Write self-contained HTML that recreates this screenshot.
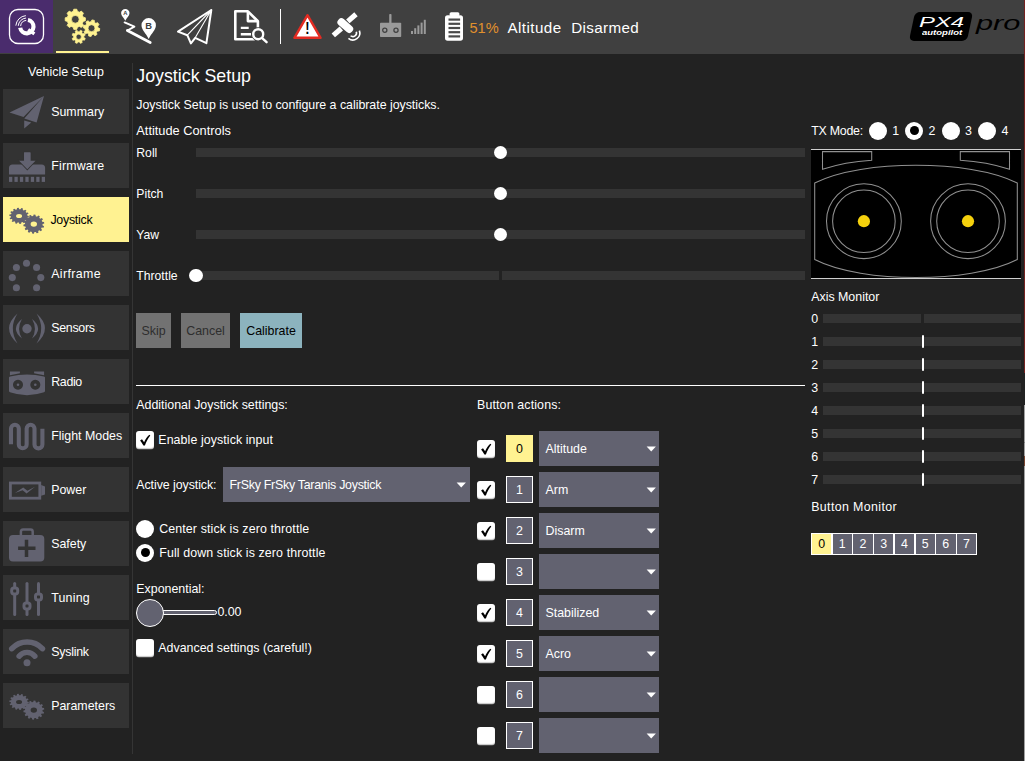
<!DOCTYPE html>
<html lang="en"><head><meta charset="utf-8"><title>QGroundControl - Joystick Setup</title>
<style>
html,body{margin:0;padding:0;}
body{width:1025px;height:761px;overflow:hidden;background:#222222;position:relative;
 font-family:"Liberation Sans",sans-serif;color:#fff;}
.b{position:absolute;box-sizing:border-box;display:block;}
.t{position:absolute;white-space:nowrap;}
</style></head>
<body>
<!-- toolbar -->
<div class="b" style="left:0px;top:0px;width:1025px;height:54px;background:#404040;"></div>
<div class="b" style="left:0px;top:0px;width:53px;height:53px;background:#4a2c6d;"></div>
<svg class="b" style="left:5px;top:5px;" width="44" height="44" viewBox="0 0 44 44">
<rect x="4.5" y="4.5" width="34" height="34" rx="8.5" ry="8.5" fill="none" stroke="#fff" stroke-width="1.3"/>
<path d="M22.96 15.0 A6.7 6.7 0 1 1 15.2 22.76" fill="none" stroke="#fff" stroke-width="4.2"/>
<path d="M23.2 24.6 L29.4 28.8" stroke="#fff" stroke-width="3.4" fill="none"/>
<path d="M10.84 20.64 A11 11 0 0 1 20.84 10.64" fill="none" stroke="#fff" stroke-width="1"/>
<path d="M13.23 20.85 A8.6 8.6 0 0 1 21.05 13.03" fill="none" stroke="#fff" stroke-width="1"/>
<path d="M15.62 21.06 A6.2 6.2 0 0 1 21.26 15.42" fill="none" stroke="#fff" stroke-width="1"/>
</svg>
<div class="b" style="left:56px;top:51px;width:53px;height:2px;background:#fff291;"></div>
<svg class="b" style="left:60px;top:5px;" width="46" height="44" viewBox="0 0 46 44"><path fill="#fff291" fill-rule="evenodd" stroke="#fff291" stroke-width="0.8" stroke-linejoin="round" d="M23.23 12.20 L25.39 12.78 L25.39 15.82 L23.23 16.40 L22.39 18.42 L23.50 20.36 L21.36 22.50 L19.42 21.39 L17.40 22.23 L16.82 24.39 L13.78 24.39 L13.20 22.23 L11.18 21.39 L9.24 22.50 L7.10 20.36 L8.21 18.42 L7.37 16.40 L5.21 15.82 L5.21 12.78 L7.37 12.20 L8.21 10.18 L7.10 8.24 L9.24 6.10 L11.18 7.21 L13.20 6.37 L13.78 4.21 L16.82 4.21 L17.40 6.37 L19.42 7.21 L21.36 6.10 L23.50 8.24 L22.39 10.18Z M19.20 14.30 A3.9 3.9 0 1 0 11.40 14.30 A3.9 3.9 0 1 0 19.20 14.30Z"/><path fill="#fff291" fill-rule="evenodd" stroke="#fff291" stroke-width="0.8" stroke-linejoin="round" d="M37.99 22.82 L39.79 23.62 L39.30 26.04 L37.33 26.08 L36.36 27.52 L37.06 29.36 L35.01 30.72 L33.58 29.36 L31.88 29.69 L31.08 31.49 L28.66 31.00 L28.62 29.03 L27.18 28.06 L25.34 28.76 L23.98 26.71 L25.34 25.28 L25.01 23.58 L23.21 22.78 L23.70 20.36 L25.67 20.32 L26.64 18.88 L25.94 17.04 L27.99 15.68 L29.42 17.04 L31.12 16.71 L31.92 14.91 L34.34 15.40 L34.38 17.37 L35.82 18.34 L37.66 17.64 L39.02 19.69 L37.66 21.12Z M35.00 23.20 A3.5 3.5 0 1 0 28.00 23.20 A3.5 3.5 0 1 0 35.00 23.20Z"/><path fill="#fff291" fill-rule="evenodd" stroke="#fff291" stroke-width="0.6" stroke-linejoin="round" d="M23.86 32.48 L25.30 33.42 L24.54 35.29 L22.84 34.94 L21.87 35.93 L22.22 37.62 L20.36 38.39 L19.41 36.95 L18.02 36.96 L17.08 38.40 L15.21 37.64 L15.56 35.94 L14.57 34.97 L12.88 35.32 L12.11 33.46 L13.55 32.51 L13.54 31.12 L12.10 30.18 L12.86 28.31 L14.56 28.66 L15.53 27.67 L15.18 25.98 L17.04 25.21 L17.99 26.65 L19.38 26.64 L20.32 25.20 L22.19 25.96 L21.84 27.66 L22.83 28.63 L24.52 28.28 L25.29 30.14 L23.85 31.09Z M21.30 31.80 A2.6 2.6 0 1 0 16.10 31.80 A2.6 2.6 0 1 0 21.30 31.80Z"/></svg>
<svg class="b" style="left:116px;top:5px;" width="46" height="44" viewBox="0 0 46 44">
<path d="M9.3 3.9 a4.2 4.2 0 0 1 4.2 4.2 c0 2.6 -2.6 4.8 -4.2 7.6 c-1.6 -2.8 -4.2 -5 -4.2 -7.6 a4.2 4.2 0 0 1 4.2 -4.2z" fill="#fff"/>
<path d="M32.7 13.1 a7.2 7.2 0 0 1 7.2 7.2 c0 4.6 -4.6 8.2 -7.2 13.6 c-2.6 -5.4 -7.2 -9 -7.2 -13.6 a7.2 7.2 0 0 1 7.2 -7.2z" fill="#fff"/>
<path d="M8.6 17.4 L18.4 21.7 L11.4 25.5" fill="none" stroke="#fff" stroke-width="1.9" stroke-linejoin="round" stroke-linecap="round"/>
<path d="M11.4 25.5 L34.2 37.6" fill="none" stroke="#fff" stroke-width="2.8" stroke-linecap="round"/>
<text x="9.3" y="10.2" font-family="Liberation Sans, sans-serif" font-size="5.8" font-weight="bold" text-anchor="middle" fill="#404040">A</text>
<text x="32.7" y="23.7" font-family="Liberation Sans, sans-serif" font-size="9.4" font-weight="bold" text-anchor="middle" fill="#404040">B</text>
</svg>
<svg class="b" style="left:172px;top:5px;" width="46" height="44" viewBox="0 0 46 44">
<path d="M39.3 5.0 L6 26.6 L15.3 30.2 L18.9 38.4 L23.2 32.8 L34.4 38.2 Z" fill="none" stroke="#fff" stroke-width="2" stroke-linejoin="round"/>
<path d="M39.3 5.0 L15.3 30.2 M39.3 5.0 L23.2 32.8" fill="none" stroke="#fff" stroke-width="1.1"/>
</svg>
<svg class="b" style="left:228px;top:5px;" width="46" height="44" viewBox="0 0 46 44">
<path d="M29.9 24 V16.2 L19.9 6.3 H7.3 V34.3 H26" fill="none" stroke="#fff" stroke-width="2.6" stroke-linejoin="round" stroke-linecap="round"/>
<path d="M19.9 6.6 V16.1 H29.6" fill="none" stroke="#fff" stroke-width="2.6" stroke-linejoin="round"/>
<path d="M12.8 22.9 H20.7 M12.8 29.2 H23" fill="none" stroke="#fff" stroke-width="2.4"/>
<circle cx="30.2" cy="29.2" r="6.9" fill="#404040"/>
<circle cx="30.2" cy="29.2" r="5" fill="#404040" stroke="#fff" stroke-width="2.4"/>
<path d="M34.4 33.4 L38.6 37.2" stroke="#fff" stroke-width="2.4" stroke-linecap="round"/>
</svg>
<div class="b" style="left:280px;top:9px;width:1.4px;height:35px;background:#ffffff;"></div>
<svg class="b" style="left:290px;top:8px;" width="36" height="36" viewBox="0 0 36 36">
<path d="M17.5 7.2 L30.6 29.8 H4.4 Z" fill="#fff" stroke="#e22b22" stroke-width="2.4" stroke-linejoin="round"/>
<text x="17.5" y="26.2" font-family="Liberation Sans, sans-serif" font-size="16" font-weight="bold" text-anchor="middle" fill="#000" transform="translate(17.5 0) scale(0.8 1) translate(-17.5 0)">!</text>
</svg>
<svg class="b" style="left:330px;top:8px;" width="36" height="36" viewBox="0 0 36 36">
<rect x="-9" y="-3.9" width="18" height="7.8" rx="3.6" fill="#fff" transform="translate(15.3 17.6) rotate(41)"/>
<rect x="-5.4" y="-2.6" width="10.8" height="5.2" fill="#fff" transform="translate(21.9 9.8) rotate(-41)"/>
<rect x="-5.3" y="-2.6" width="10.6" height="5.2" fill="#fff" transform="translate(7.3 23.9) rotate(-41)"/>
<path d="M29.38 22.64 A6.9 6.9 0 0 1 18.46 30.29" fill="none" stroke="#fff" stroke-width="1.6"/>
<path d="M26.28 23.77 A3.6 3.6 0 0 1 20.59 27.76" fill="none" stroke="#fff" stroke-width="1.6"/>
</svg>
<svg class="b" style="left:376px;top:8px;" width="30" height="36" viewBox="0 0 30 36">
<rect x="4" y="14.7" width="21.2" height="14.4" rx="0.8" fill="#9a9a9a"/>
<rect x="13.2" y="5.9" width="2.3" height="10" rx="0.8" fill="#9a9a9a"/>
<circle cx="8.8" cy="22.3" r="2.1" fill="none" stroke="#404040" stroke-width="1.25"/>
<circle cx="20" cy="22.3" r="2.1" fill="none" stroke="#404040" stroke-width="1.25"/>
</svg>
<svg class="b" style="left:410px;top:14px;" width="18" height="22" viewBox="0 0 18 22"><rect x="1.0" y="17.0" width="2" height="3.0" fill="#9a9a9a"/><rect x="4.2" y="14.2" width="2" height="5.8" fill="#9a9a9a"/><rect x="7.4" y="11.4" width="2" height="8.6" fill="#9a9a9a"/><rect x="10.6" y="8.6" width="2" height="11.4" fill="#9a9a9a"/><rect x="13.8" y="5.8" width="2" height="14.2" fill="#9a9a9a"/></svg>
<svg class="b" style="left:445px;top:11.6px;" width="18" height="29" viewBox="0 0 18 29"><rect x="0" y="3.15" width="18" height="25.5" rx="2.6" fill="#fff"/><rect x="4.6" y="0.2" width="9.8" height="4" rx="1.6" fill="#fff"/><rect x="3.5" y="6.50" width="11.6" height="2.2" fill="#4a4a4a"/><rect x="3.5" y="10.70" width="11.6" height="2.2" fill="#4a4a4a"/><rect x="3.5" y="14.90" width="11.6" height="2.2" fill="#4a4a4a"/><rect x="3.5" y="19.10" width="11.6" height="2.2" fill="#4a4a4a"/><rect x="3.5" y="23.30" width="11.6" height="2.2" fill="#4a4a4a"/></svg>
<div class="t" style="top:18.00px;font-size:14.6px;line-height:20px;color:#e0912d;left:469.5px;">51%</div>
<div class="t" style="top:17.00px;font-size:15.2px;line-height:21px;color:#fff;left:507.5px;letter-spacing:0.42px;">Altitude</div>
<div class="t" style="top:17.00px;font-size:15.2px;line-height:21px;color:#fff;left:571.2px;letter-spacing:0.35px;">Disarmed</div>
<div class="b" style="left:911.5px;top:12px;width:58px;height:29px;background:#000;border-radius:5px;transform:skewX(-12deg);"></div>
<div class="t" style="left:918.5px;top:14.4px;font-size:14.4px;line-height:16px;font-style:italic;color:#fff;transform:scaleX(1.66);transform-origin:left center;">PX4</div>
<div class="t" style="left:921.5px;top:29.2px;font-size:7px;line-height:8px;font-style:italic;font-weight:bold;color:#fff;transform:scaleX(1.36);transform-origin:left center;">autopilot</div>
<div class="t" style="left:976px;top:10.6px;font-size:20.5px;line-height:23px;font-style:italic;color:#000;transform:scaleX(1.5);transform-origin:left center;">pro</div>
<!-- sidebar -->
<div class="t" style="top:63.00px;font-size:12.4px;line-height:18px;color:#fff;left:-84px;width:300px;text-align:center;">Vehicle Setup</div>
<div class="b" style="left:132px;top:63px;width:1px;height:691px;background:#353535;"></div>
<div class="b" style="left:3px;top:89px;width:126px;height:45px;background:#333333;"></div>
<svg class="b" style="left:9px;top:93.5px;overflow:visible;" width="36" height="36" viewBox="0 0 36 36"><path d="M35 2 L0.5 18.5 L14.5 23 Z M35 2 L15.3 24.6 L27.6 28.4 Z M15.2 26.4 L22.3 28.6 L15.2 34.4 Z" fill="#626270"/></svg>
<div class="t" style="top:103.00px;font-size:12.4px;line-height:18px;color:#fff;left:51.2px;">Summary</div>
<div class="b" style="left:3px;top:143px;width:126px;height:45px;background:#333333;"></div>
<svg class="b" style="left:9px;top:147.5px;overflow:visible;" width="36" height="36" viewBox="0 0 36 36"><path d="M0 26.6 V20 Q0 16.5 3.5 16.5 H32.6 Q36.1 16.5 36.1 20 V26.6 Z" fill="#626270"/><path d="M15.1 4.5 H21.4 V12.7 H26.5 L18.3 21.25 L10.1 12.7 H15.1 Z" fill="#626270" stroke="#333333" stroke-width="1.7" paint-order="stroke"/><rect x="15.1" y="4.5" width="6.3" height="9" fill="#626270"/><rect x="0.00" y="28.8" width="3.3" height="5.1" fill="#626270"/><rect x="5.45" y="28.8" width="3.3" height="5.1" fill="#626270"/><rect x="10.90" y="28.8" width="3.3" height="5.1" fill="#626270"/><rect x="16.35" y="28.8" width="3.3" height="5.1" fill="#626270"/><rect x="21.80" y="28.8" width="3.3" height="5.1" fill="#626270"/><rect x="27.25" y="28.8" width="3.3" height="5.1" fill="#626270"/><rect x="32.70" y="28.8" width="3.3" height="5.1" fill="#626270"/></svg>
<div class="t" style="top:157.00px;font-size:12.4px;line-height:18px;color:#fff;letter-spacing:0.186px;left:51.2px;">Firmware</div>
<div class="b" style="left:3px;top:197px;width:126px;height:45px;background:#fff291;"></div>
<svg class="b" style="left:9px;top:201.5px;overflow:visible;" width="36" height="36" viewBox="0 0 36 36"><g transform="translate(10.05 13.9) scale(1 0.82)"><path fill="#626270" d="M8.19 -0.39 L9.80 0.14 L9.63 1.81 L7.95 2.01 L7.55 3.20 L8.77 4.38 L7.90 5.81 L6.29 5.26 L5.41 6.16 L6.00 7.75 L4.59 8.66 L3.38 7.47 L2.21 7.90 L2.04 9.59 L0.38 9.79 L-0.19 8.20 L-1.44 8.07 L-2.32 9.52 L-3.90 8.99 L-3.73 7.30 L-4.80 6.65 L-6.22 7.57 L-7.42 6.41 L-6.53 4.96 L-7.21 3.91 L-8.89 4.12 L-9.46 2.55 L-8.04 1.63 L-8.19 0.39 L-9.80 -0.14 L-9.63 -1.81 L-7.95 -2.01 L-7.55 -3.20 L-8.77 -4.38 L-7.90 -5.81 L-6.29 -5.26 L-5.41 -6.16 L-6.00 -7.75 L-4.59 -8.66 L-3.38 -7.47 L-2.21 -7.90 L-2.04 -9.59 L-0.38 -9.79 L0.19 -8.20 L1.44 -8.07 L2.32 -9.52 L3.90 -8.99 L3.73 -7.30 L4.80 -6.65 L6.22 -7.57 L7.42 -6.41 L6.53 -4.96 L7.21 -3.91 L8.89 -4.12 L9.46 -2.55 L8.04 -1.63Z M0.01 0.00 A0.01 0.01 0 1 0 -0.01 0.00 A0.01 0.01 0 1 0 0.01 0.00Z"/></g><g transform="translate(24.8 22.1) scale(1 0.91)"><path fill="#626270" d="M8.70 1.33 L10.26 2.24 L9.73 3.95 L7.93 3.81 L7.26 4.97 L8.27 6.47 L7.05 7.78 L5.49 6.88 L4.38 7.63 L4.65 9.42 L2.98 10.07 L1.96 8.58 L0.64 8.78 L0.10 10.50 L-1.68 10.36 L-1.95 8.58 L-3.23 8.18 L-4.46 9.50 L-6.01 8.61 L-5.48 6.88 L-6.46 5.97 L-8.15 6.63 L-9.15 5.15 L-7.93 3.82 L-8.41 2.57 L-10.21 2.44 L-10.48 0.67 L-8.80 0.01 L-8.70 -1.33 L-10.26 -2.24 L-9.73 -3.95 L-7.93 -3.81 L-7.26 -4.97 L-8.27 -6.47 L-7.05 -7.78 L-5.49 -6.88 L-4.38 -7.63 L-4.65 -9.42 L-2.98 -10.07 L-1.96 -8.58 L-0.64 -8.78 L-0.10 -10.50 L1.68 -10.36 L1.95 -8.58 L3.23 -8.18 L4.46 -9.50 L6.01 -8.61 L5.48 -6.88 L6.46 -5.97 L8.15 -6.63 L9.15 -5.15 L7.93 -3.82 L8.41 -2.57 L10.21 -2.44 L10.48 -0.67 L8.80 -0.01Z M0.01 0.00 A0.01 0.01 0 1 0 -0.01 0.00 A0.01 0.01 0 1 0 0.01 0.00Z"/></g><ellipse cx="10.05" cy="13.9" rx="3.0" ry="2.0" fill="#fff291"/><ellipse cx="24.8" cy="22.1" rx="3.2" ry="2.6" fill="#fff291"/></svg>
<div class="t" style="top:211.00px;font-size:12.4px;line-height:18px;color:#000;letter-spacing:-0.257px;left:50.4px;">Joystick</div>
<div class="b" style="left:3px;top:251px;width:126px;height:45px;background:#333333;"></div>
<svg class="b" style="left:9px;top:255.5px;overflow:visible;" width="36" height="36" viewBox="0 0 36 36"><circle cx="17.5" cy="7.25" r="3.55" fill="#626270"/><circle cx="27.6" cy="11.5" r="3.55" fill="#626270"/><circle cx="31.8" cy="21.6" r="3.55" fill="#626270"/><circle cx="27.6" cy="31.7" r="3.55" fill="#626270"/><circle cx="7.4" cy="31.7" r="3.55" fill="#626270"/><circle cx="3.3" cy="21.6" r="3.55" fill="#626270"/><circle cx="7.4" cy="11.5" r="3.55" fill="#626270"/></svg>
<div class="t" style="top:265.00px;font-size:12.4px;line-height:18px;color:#fff;letter-spacing:0.371px;left:51.2px;">Airframe</div>
<div class="b" style="left:3px;top:305px;width:126px;height:45px;background:#333333;"></div>
<svg class="b" style="left:9px;top:309.5px;overflow:visible;" width="36" height="36" viewBox="0 0 36 36"><circle cx="18" cy="18.7" r="4.7" fill="#626270"/><path d="M8.5 3.6 Q-8.5 18.55 8.5 33.5 Q-0.9 18.55 8.5 3.6 Z" fill="#626270"/><path d="M12.9 9 Q0.9 18.75 12.9 28.5 Q7.3 18.75 12.9 9 Z" fill="#626270"/><path d="M27.5 3.6 Q44.5 18.55 27.5 33.5 Q36.9 18.55 27.5 3.6 Z" fill="#626270"/><path d="M23.1 9 Q35.1 18.75 23.1 28.5 Q28.7 18.75 23.1 9 Z" fill="#626270"/></svg>
<div class="t" style="top:319.00px;font-size:12.4px;line-height:18px;color:#fff;letter-spacing:-0.283px;left:51.2px;">Sensors</div>
<div class="b" style="left:3px;top:359px;width:126px;height:45px;background:#333333;"></div>
<svg class="b" style="left:9px;top:363.5px;overflow:visible;" width="36" height="36" viewBox="0 0 36 36"><path d="M0 13.6 Q0 12.6 1 12.4 Q18 8.6 35 12.4 Q36 12.6 36 13.6 V27 Q36 28 35 28.3 Q18 34.2 1 28.3 Q0 28 0 27 Z M9 15.75 a5 5 0 1 0 0.01 0 Z M26.3 15.75 a5 5 0 1 0 0.01 0 Z" fill="#626270" fill-rule="evenodd"/><circle cx="9" cy="20.75" r="1.3" fill="#626270"/><circle cx="26.3" cy="20.75" r="1.3" fill="#626270"/><path d="M0.9 7.4 H10.9 V9.2 L0.9 11.2 Z M35.1 7.4 H25.1 V9.2 L35.1 11.2 Z" fill="#626270"/></svg>
<div class="t" style="top:373.00px;font-size:12.4px;line-height:18px;color:#fff;letter-spacing:-0.325px;left:51.2px;">Radio</div>
<div class="b" style="left:3px;top:413px;width:126px;height:45px;background:#333333;"></div>
<svg class="b" style="left:9px;top:417.5px;overflow:visible;" width="36" height="36" viewBox="0 0 36 36"><path d="M2 26.3 V10.6 A3.9 3.9 0 0 1 9.8 10.6 V26.4 A3.925 3.925 0 0 0 17.65 26.4 V10.6 A3.925 3.925 0 0 1 25.5 10.6 V26.4 A3.95 3.95 0 0 0 33.4 26.4 V10.8" fill="none" stroke="#626270" stroke-width="4.1"/></svg>
<div class="t" style="top:427.00px;font-size:12.4px;line-height:18px;color:#fff;left:51.2px;">Flight Modes</div>
<div class="b" style="left:3px;top:467px;width:126px;height:45px;background:#333333;"></div>
<svg class="b" style="left:9px;top:471.5px;overflow:visible;" width="36" height="36" viewBox="0 0 36 36"><rect x="1.4" y="11" width="29.4" height="15.2" fill="none" stroke="#626270" stroke-width="2.8"/><path d="M32.2 13.1 L36 14.6 V22.5 L32.2 23.8 Z" fill="#626270"/><path d="M6 21 L14.2 15.4 L18.4 18.8 L26 14.8 L17.6 21.4 L13.6 18.2 Z" fill="#626270"/></svg>
<div class="t" style="top:481.00px;font-size:12.4px;line-height:18px;color:#fff;left:51.2px;">Power</div>
<div class="b" style="left:3px;top:521px;width:126px;height:45px;background:#333333;"></div>
<svg class="b" style="left:9px;top:525.5px;overflow:visible;" width="36" height="36" viewBox="0 0 36 36"><path d="M4 8.95 H31.3 Q35.3 8.95 35.3 12.95 V31.5 Q35.3 35.5 31.3 35.5 H4 Q0 35.5 0 31.5 V12.95 Q0 8.95 4 8.95 Z M15.75 13.7 V20.45 H9.1 V23.95 H15.75 V31 H19.25 V23.95 H26.5 V20.45 H19.25 V13.7 Z" fill="#626270" fill-rule="evenodd"/><path d="M11.9 9.4 V5.7 Q11.9 3.5 14.1 3.5 H21.5 Q23.7 3.5 23.7 5.7 V9.4" fill="none" stroke="#626270" stroke-width="2.5"/></svg>
<div class="t" style="top:535.00px;font-size:12.4px;line-height:18px;color:#fff;left:51.2px;">Safety</div>
<div class="b" style="left:3px;top:575px;width:126px;height:45px;background:#333333;"></div>
<svg class="b" style="left:9px;top:579.5px;overflow:visible;" width="36" height="36" viewBox="0 0 36 36"><path d="M5.7 3.6 V34.4" stroke="#626270" stroke-width="3" stroke-linecap="round"/><rect x="2.7" y="8.0" width="6" height="6" rx="2.2" fill="#333333" stroke="#626270" stroke-width="3"/><path d="M18.0 3.6 V34.4" stroke="#626270" stroke-width="3" stroke-linecap="round"/><rect x="15.0" y="23.0" width="6" height="6" rx="2.2" fill="#333333" stroke="#626270" stroke-width="3"/><path d="M29.5 3.6 V34.4" stroke="#626270" stroke-width="3" stroke-linecap="round"/><rect x="26.5" y="14.0" width="6" height="6" rx="2.2" fill="#333333" stroke="#626270" stroke-width="3"/></svg>
<div class="t" style="top:589.00px;font-size:12.4px;line-height:18px;color:#fff;letter-spacing:0.200px;left:51.2px;">Tuning</div>
<div class="b" style="left:3px;top:629px;width:126px;height:45px;background:#333333;"></div>
<svg class="b" style="left:9px;top:633.5px;overflow:visible;" width="36" height="36" viewBox="0 0 36 36"><circle cx="18" cy="28.8" r="3.5" fill="#626270"/><path d="M10.1 22.2 A10.1 10.1 0 0 1 25.9 22.2" fill="none" stroke="#626270" stroke-width="5.4" stroke-linecap="round"/><path d="M2.8 14.6 A21 21 0 0 1 33.4 14.6" fill="none" stroke="#626270" stroke-width="5.6" stroke-linecap="round"/></svg>
<div class="t" style="top:643.00px;font-size:12.4px;line-height:18px;color:#fff;letter-spacing:-0.233px;left:51.2px;">Syslink</div>
<div class="b" style="left:3px;top:683px;width:126px;height:45px;background:#333333;"></div>
<svg class="b" style="left:9px;top:687.5px;overflow:visible;" width="36" height="36" viewBox="0 0 36 36"><g transform="translate(10.05 13.9) scale(1 0.82)"><path fill="#626270" d="M8.19 -0.39 L9.80 0.14 L9.63 1.81 L7.95 2.01 L7.55 3.20 L8.77 4.38 L7.90 5.81 L6.29 5.26 L5.41 6.16 L6.00 7.75 L4.59 8.66 L3.38 7.47 L2.21 7.90 L2.04 9.59 L0.38 9.79 L-0.19 8.20 L-1.44 8.07 L-2.32 9.52 L-3.90 8.99 L-3.73 7.30 L-4.80 6.65 L-6.22 7.57 L-7.42 6.41 L-6.53 4.96 L-7.21 3.91 L-8.89 4.12 L-9.46 2.55 L-8.04 1.63 L-8.19 0.39 L-9.80 -0.14 L-9.63 -1.81 L-7.95 -2.01 L-7.55 -3.20 L-8.77 -4.38 L-7.90 -5.81 L-6.29 -5.26 L-5.41 -6.16 L-6.00 -7.75 L-4.59 -8.66 L-3.38 -7.47 L-2.21 -7.90 L-2.04 -9.59 L-0.38 -9.79 L0.19 -8.20 L1.44 -8.07 L2.32 -9.52 L3.90 -8.99 L3.73 -7.30 L4.80 -6.65 L6.22 -7.57 L7.42 -6.41 L6.53 -4.96 L7.21 -3.91 L8.89 -4.12 L9.46 -2.55 L8.04 -1.63Z M0.01 0.00 A0.01 0.01 0 1 0 -0.01 0.00 A0.01 0.01 0 1 0 0.01 0.00Z"/></g><g transform="translate(24.8 22.1) scale(1 0.91)"><path fill="#626270" d="M8.70 1.33 L10.26 2.24 L9.73 3.95 L7.93 3.81 L7.26 4.97 L8.27 6.47 L7.05 7.78 L5.49 6.88 L4.38 7.63 L4.65 9.42 L2.98 10.07 L1.96 8.58 L0.64 8.78 L0.10 10.50 L-1.68 10.36 L-1.95 8.58 L-3.23 8.18 L-4.46 9.50 L-6.01 8.61 L-5.48 6.88 L-6.46 5.97 L-8.15 6.63 L-9.15 5.15 L-7.93 3.82 L-8.41 2.57 L-10.21 2.44 L-10.48 0.67 L-8.80 0.01 L-8.70 -1.33 L-10.26 -2.24 L-9.73 -3.95 L-7.93 -3.81 L-7.26 -4.97 L-8.27 -6.47 L-7.05 -7.78 L-5.49 -6.88 L-4.38 -7.63 L-4.65 -9.42 L-2.98 -10.07 L-1.96 -8.58 L-0.64 -8.78 L-0.10 -10.50 L1.68 -10.36 L1.95 -8.58 L3.23 -8.18 L4.46 -9.50 L6.01 -8.61 L5.48 -6.88 L6.46 -5.97 L8.15 -6.63 L9.15 -5.15 L7.93 -3.82 L8.41 -2.57 L10.21 -2.44 L10.48 -0.67 L8.80 -0.01Z M0.01 0.00 A0.01 0.01 0 1 0 -0.01 0.00 A0.01 0.01 0 1 0 0.01 0.00Z"/></g><ellipse cx="10.05" cy="13.9" rx="3.0" ry="2.0" fill="#333333"/><ellipse cx="24.8" cy="22.1" rx="3.2" ry="2.6" fill="#333333"/></svg>
<div class="t" style="top:697.00px;font-size:12.4px;line-height:18px;color:#fff;left:51.2px;">Parameters</div>
<!-- main panel -->
<div class="t" style="top:64.00px;font-size:17.8px;line-height:24px;color:#fff;left:136.3px;">Joystick Setup</div>
<div class="t" style="top:96.00px;font-size:12.4px;line-height:18px;color:#fff;letter-spacing:-0.025px;left:136.3px;">Joystick Setup is used to configure a calibrate joysticks.</div>
<div class="t" style="top:121.00px;font-size:12.8px;line-height:19px;color:#fff;left:136.3px;">Attitude Controls</div>
<div class="t" style="top:144.00px;font-size:12.2px;line-height:18px;color:#fff;left:136.3px;">Roll</div>
<div class="b" style="left:196px;top:148px;width:609px;height:9px;background:#343434;"></div>
<div class="b" style="left:493.6px;top:145.5px;width:13.7px;height:13.7px;background:#ffffff;border-radius:50%;"></div>
<div class="t" style="top:185.00px;font-size:12.2px;line-height:18px;color:#fff;left:136.3px;">Pitch</div>
<div class="b" style="left:196px;top:189px;width:609px;height:9px;background:#343434;"></div>
<div class="b" style="left:493.6px;top:186.5px;width:13.7px;height:13.7px;background:#ffffff;border-radius:50%;"></div>
<div class="t" style="top:226.00px;font-size:12.2px;line-height:18px;color:#fff;left:136.3px;">Yaw</div>
<div class="b" style="left:196px;top:230px;width:609px;height:9px;background:#343434;"></div>
<div class="b" style="left:493.6px;top:227.5px;width:13.7px;height:13.7px;background:#ffffff;border-radius:50%;"></div>
<div class="t" style="top:267.00px;font-size:12.2px;line-height:18px;color:#fff;left:136.3px;">Throttle</div>
<div class="b" style="left:196px;top:271px;width:303px;height:9px;background:#343434;"></div>
<div class="b" style="left:502px;top:271px;width:303px;height:9px;background:#343434;"></div>
<div class="b" style="left:189.1px;top:268.5px;width:13.8px;height:13.7px;background:#ffffff;border-radius:50%;"></div>
<div class="b" style="left:136px;top:313px;width:35px;height:35px;background:#727272;"></div>
<div class="t" style="top:322.00px;font-size:12.4px;line-height:18px;color:#2e2e2e;left:3.5px;width:300px;text-align:center;">Skip</div>
<div class="b" style="left:181px;top:313px;width:49px;height:35px;background:#727272;"></div>
<div class="t" style="top:322.00px;font-size:12.4px;line-height:18px;color:#2e2e2e;left:55.5px;width:300px;text-align:center;">Cancel</div>
<div class="b" style="left:240px;top:313px;width:62px;height:35px;background:#8cb3be;"></div>
<div class="t" style="top:322.00px;font-size:12.4px;line-height:18px;color:#000000;left:121.0px;width:300px;text-align:center;">Calibrate</div>
<div class="b" style="left:136px;top:385px;width:669px;height:1px;background:#ffffff;"></div>
<div class="t" style="top:396.00px;font-size:12.4px;line-height:18px;color:#fff;left:136.3px;">Additional Joystick settings:</div>
<div class="t" style="top:396.00px;font-size:12.4px;line-height:18px;color:#fff;letter-spacing:0.143px;left:477px;">Button actions:</div>
<div class="b" style="left:136px;top:431px;width:18px;height:18px;background:#ffffff;border-radius:3px;box-shadow:inset 0 -1px 1px rgba(0,0,0,.22), 0 0.6px 0.6px rgba(255,255,255,.35);"></div>
<svg class="b" style="left:136px;top:431px;" width="18" height="18" viewBox="0 0 18 18"><path d="M4.1 9.5 L6 8.3 L8.1 11.2 C9.5 8.2 11.2 5.6 13.3 3.8 L14.3 4.5 C12 7.4 10.2 10.8 8.9 14.4 L7.4 14.6 C6.5 12.7 5.4 11 4.1 9.5 Z" fill="#000"/></svg>
<div class="t" style="top:431.00px;font-size:12.4px;line-height:18px;color:#fff;letter-spacing:0.085px;left:158.3px;">Enable joystick input</div>
<div class="t" style="top:476.00px;font-size:12.4px;line-height:18px;color:#fff;letter-spacing:-0.067px;left:136.3px;">Active joystick:</div>
<div class="b" style="left:223px;top:467px;width:247px;height:35px;background:#626270;"></div>
<div class="t" style="top:476.00px;font-size:12.4px;line-height:18px;color:#fff;letter-spacing:-0.256px;left:229.5px;">FrSky FrSky Taranis Joystick</div>
<svg class="b" style="left:455.5px;top:481.5px;" width="11" height="6" viewBox="0 0 11 6"><path d="M0.6 0.4 H9.9 L5.25 5.6 Z" fill="#fff"/></svg>
<div class="b" style="left:136px;top:519.7px;width:18px;height:18px;background:#ffffff;border-radius:50%;"></div>
<div class="t" style="top:520.00px;font-size:12.4px;line-height:18px;color:#fff;letter-spacing:0.121px;left:159.2px;">Center stick is zero throttle</div>
<div class="b" style="left:136px;top:543.5px;width:18px;height:18px;background:#ffffff;border-radius:50%;"></div>
<div class="b" style="left:140.5px;top:548.0px;width:9px;height:9px;background:#000000;border-radius:50%;"></div>
<div class="t" style="top:544.00px;font-size:12.4px;line-height:18px;color:#fff;letter-spacing:0.119px;left:159.2px;">Full down stick is zero throttle</div>
<div class="t" style="top:580.00px;font-size:12.4px;line-height:18px;color:#fff;left:136.3px;">Exponential:</div>
<div class="b" style="left:150px;top:609.7px;width:67.2px;height:5.4px;background:#626270;border:1px solid #fff;border-radius:3px;"></div>
<div class="b" style="left:136px;top:598.8px;width:28.2px;height:28.2px;background:#626270;border-radius:50%;border:1.2px solid #fff;"></div>
<div class="t" style="top:603.00px;font-size:12.4px;line-height:18px;color:#fff;left:217.4px;">0.00</div>
<div class="b" style="left:136px;top:639px;width:18px;height:18px;background:#ffffff;border-radius:3px;box-shadow:inset 0 -1px 1px rgba(0,0,0,.22), 0 0.6px 0.6px rgba(255,255,255,.35);"></div>
<div class="t" style="top:639.00px;font-size:12.4px;line-height:18px;color:#fff;left:158.3px;">Advanced settings (careful!)</div>
<div class="b" style="left:477px;top:440px;width:18px;height:18px;background:#ffffff;border-radius:3px;box-shadow:inset 0 -1px 1px rgba(0,0,0,.22), 0 0.6px 0.6px rgba(255,255,255,.35);"></div>
<svg class="b" style="left:477px;top:440px;" width="18" height="18" viewBox="0 0 18 18"><path d="M4.1 9.5 L6 8.3 L8.1 11.2 C9.5 8.2 11.2 5.6 13.3 3.8 L14.3 4.5 C12 7.4 10.2 10.8 8.9 14.4 L7.4 14.6 C6.5 12.7 5.4 11 4.1 9.5 Z" fill="#000"/></svg>
<div class="b" style="left:506px;top:435px;width:27px;height:27px;background:#fff291;"></div>
<div class="t" style="top:440.00px;font-size:12.4px;line-height:18px;color:#000;left:369.5px;width:300px;text-align:center;">0</div>
<div class="b" style="left:539px;top:431px;width:120px;height:35px;background:#626270;"></div>
<div class="t" style="top:440.00px;font-size:12.4px;line-height:18px;color:#fff;left:545.5px;">Altitude</div>
<svg class="b" style="left:645.5px;top:445.5px;" width="11" height="6" viewBox="0 0 11 6"><path d="M0.6 0.4 H9.9 L5.25 5.6 Z" fill="#fff"/></svg>
<div class="b" style="left:477px;top:481px;width:18px;height:18px;background:#ffffff;border-radius:3px;box-shadow:inset 0 -1px 1px rgba(0,0,0,.22), 0 0.6px 0.6px rgba(255,255,255,.35);"></div>
<svg class="b" style="left:477px;top:481px;" width="18" height="18" viewBox="0 0 18 18"><path d="M4.1 9.5 L6 8.3 L8.1 11.2 C9.5 8.2 11.2 5.6 13.3 3.8 L14.3 4.5 C12 7.4 10.2 10.8 8.9 14.4 L7.4 14.6 C6.5 12.7 5.4 11 4.1 9.5 Z" fill="#000"/></svg>
<div class="b" style="left:506px;top:476px;width:27px;height:27px;background:#626270;border:1px solid #fff;"></div>
<div class="t" style="top:481.00px;font-size:12.4px;line-height:18px;color:#fff;left:369.5px;width:300px;text-align:center;">1</div>
<div class="b" style="left:539px;top:472px;width:120px;height:35px;background:#626270;"></div>
<div class="t" style="top:481.00px;font-size:12.4px;line-height:18px;color:#fff;left:545.5px;">Arm</div>
<svg class="b" style="left:645.5px;top:486.5px;" width="11" height="6" viewBox="0 0 11 6"><path d="M0.6 0.4 H9.9 L5.25 5.6 Z" fill="#fff"/></svg>
<div class="b" style="left:477px;top:522px;width:18px;height:18px;background:#ffffff;border-radius:3px;box-shadow:inset 0 -1px 1px rgba(0,0,0,.22), 0 0.6px 0.6px rgba(255,255,255,.35);"></div>
<svg class="b" style="left:477px;top:522px;" width="18" height="18" viewBox="0 0 18 18"><path d="M4.1 9.5 L6 8.3 L8.1 11.2 C9.5 8.2 11.2 5.6 13.3 3.8 L14.3 4.5 C12 7.4 10.2 10.8 8.9 14.4 L7.4 14.6 C6.5 12.7 5.4 11 4.1 9.5 Z" fill="#000"/></svg>
<div class="b" style="left:506px;top:517px;width:27px;height:27px;background:#626270;border:1px solid #fff;"></div>
<div class="t" style="top:522.00px;font-size:12.4px;line-height:18px;color:#fff;left:369.5px;width:300px;text-align:center;">2</div>
<div class="b" style="left:539px;top:513px;width:120px;height:35px;background:#626270;"></div>
<div class="t" style="top:522.00px;font-size:12.4px;line-height:18px;color:#fff;left:545.5px;">Disarm</div>
<svg class="b" style="left:645.5px;top:527.5px;" width="11" height="6" viewBox="0 0 11 6"><path d="M0.6 0.4 H9.9 L5.25 5.6 Z" fill="#fff"/></svg>
<div class="b" style="left:477px;top:563px;width:18px;height:18px;background:#ffffff;border-radius:3px;box-shadow:inset 0 -1px 1px rgba(0,0,0,.22), 0 0.6px 0.6px rgba(255,255,255,.35);"></div>
<div class="b" style="left:506px;top:558px;width:27px;height:27px;background:#626270;border:1px solid #fff;"></div>
<div class="t" style="top:563.00px;font-size:12.4px;line-height:18px;color:#fff;left:369.5px;width:300px;text-align:center;">3</div>
<div class="b" style="left:539px;top:554px;width:120px;height:35px;background:#626270;"></div>
<svg class="b" style="left:645.5px;top:568.5px;" width="11" height="6" viewBox="0 0 11 6"><path d="M0.6 0.4 H9.9 L5.25 5.6 Z" fill="#fff"/></svg>
<div class="b" style="left:477px;top:604px;width:18px;height:18px;background:#ffffff;border-radius:3px;box-shadow:inset 0 -1px 1px rgba(0,0,0,.22), 0 0.6px 0.6px rgba(255,255,255,.35);"></div>
<svg class="b" style="left:477px;top:604px;" width="18" height="18" viewBox="0 0 18 18"><path d="M4.1 9.5 L6 8.3 L8.1 11.2 C9.5 8.2 11.2 5.6 13.3 3.8 L14.3 4.5 C12 7.4 10.2 10.8 8.9 14.4 L7.4 14.6 C6.5 12.7 5.4 11 4.1 9.5 Z" fill="#000"/></svg>
<div class="b" style="left:506px;top:599px;width:27px;height:27px;background:#626270;border:1px solid #fff;"></div>
<div class="t" style="top:604.00px;font-size:12.4px;line-height:18px;color:#fff;left:369.5px;width:300px;text-align:center;">4</div>
<div class="b" style="left:539px;top:595px;width:120px;height:35px;background:#626270;"></div>
<div class="t" style="top:604.00px;font-size:12.4px;line-height:18px;color:#fff;left:545.5px;">Stabilized</div>
<svg class="b" style="left:645.5px;top:609.5px;" width="11" height="6" viewBox="0 0 11 6"><path d="M0.6 0.4 H9.9 L5.25 5.6 Z" fill="#fff"/></svg>
<div class="b" style="left:477px;top:645px;width:18px;height:18px;background:#ffffff;border-radius:3px;box-shadow:inset 0 -1px 1px rgba(0,0,0,.22), 0 0.6px 0.6px rgba(255,255,255,.35);"></div>
<svg class="b" style="left:477px;top:645px;" width="18" height="18" viewBox="0 0 18 18"><path d="M4.1 9.5 L6 8.3 L8.1 11.2 C9.5 8.2 11.2 5.6 13.3 3.8 L14.3 4.5 C12 7.4 10.2 10.8 8.9 14.4 L7.4 14.6 C6.5 12.7 5.4 11 4.1 9.5 Z" fill="#000"/></svg>
<div class="b" style="left:506px;top:640px;width:27px;height:27px;background:#626270;border:1px solid #fff;"></div>
<div class="t" style="top:645.00px;font-size:12.4px;line-height:18px;color:#fff;left:369.5px;width:300px;text-align:center;">5</div>
<div class="b" style="left:539px;top:636px;width:120px;height:35px;background:#626270;"></div>
<div class="t" style="top:645.00px;font-size:12.4px;line-height:18px;color:#fff;left:545.5px;">Acro</div>
<svg class="b" style="left:645.5px;top:650.5px;" width="11" height="6" viewBox="0 0 11 6"><path d="M0.6 0.4 H9.9 L5.25 5.6 Z" fill="#fff"/></svg>
<div class="b" style="left:477px;top:686px;width:18px;height:18px;background:#ffffff;border-radius:3px;box-shadow:inset 0 -1px 1px rgba(0,0,0,.22), 0 0.6px 0.6px rgba(255,255,255,.35);"></div>
<div class="b" style="left:506px;top:681px;width:27px;height:27px;background:#626270;border:1px solid #fff;"></div>
<div class="t" style="top:686.00px;font-size:12.4px;line-height:18px;color:#fff;left:369.5px;width:300px;text-align:center;">6</div>
<div class="b" style="left:539px;top:677px;width:120px;height:35px;background:#626270;"></div>
<svg class="b" style="left:645.5px;top:691.5px;" width="11" height="6" viewBox="0 0 11 6"><path d="M0.6 0.4 H9.9 L5.25 5.6 Z" fill="#fff"/></svg>
<div class="b" style="left:477px;top:727px;width:18px;height:18px;background:#ffffff;border-radius:3px;box-shadow:inset 0 -1px 1px rgba(0,0,0,.22), 0 0.6px 0.6px rgba(255,255,255,.35);"></div>
<div class="b" style="left:506px;top:722px;width:27px;height:27px;background:#626270;border:1px solid #fff;"></div>
<div class="t" style="top:727.00px;font-size:12.4px;line-height:18px;color:#fff;left:369.5px;width:300px;text-align:center;">7</div>
<div class="b" style="left:539px;top:718px;width:120px;height:35px;background:#626270;"></div>
<svg class="b" style="left:645.5px;top:732.5px;" width="11" height="6" viewBox="0 0 11 6"><path d="M0.6 0.4 H9.9 L5.25 5.6 Z" fill="#fff"/></svg>
<!-- right panel -->
<div class="t" style="top:122.00px;font-size:12.4px;line-height:18px;color:#fff;letter-spacing:-0.243px;left:811.2px;">TX Mode:</div>
<div class="b" style="left:868.6px;top:121.69999999999999px;width:18px;height:18px;background:#ffffff;border-radius:50%;"></div>
<div class="t" style="top:122.00px;font-size:12.4px;line-height:18px;color:#fff;left:892.2px;">1</div>
<div class="b" style="left:905.0px;top:121.69999999999999px;width:18px;height:18px;background:#ffffff;border-radius:50%;"></div>
<div class="b" style="left:909.5px;top:126.19999999999999px;width:9px;height:9px;background:#000000;border-radius:50%;"></div>
<div class="t" style="top:122.00px;font-size:12.4px;line-height:18px;color:#fff;left:928.6px;">2</div>
<div class="b" style="left:941.5px;top:121.69999999999999px;width:18px;height:18px;background:#ffffff;border-radius:50%;"></div>
<div class="t" style="top:122.00px;font-size:12.4px;line-height:18px;color:#fff;left:965.1px;">3</div>
<div class="b" style="left:978.0px;top:121.69999999999999px;width:18px;height:18px;background:#ffffff;border-radius:50%;"></div>
<div class="t" style="top:122.00px;font-size:12.4px;line-height:18px;color:#fff;left:1001.6px;">4</div>
<div class="b" style="left:811px;top:149px;width:210px;height:130px;background:#000000;border-top:1px solid #cfcfcf;border-bottom:1px solid #cfcfcf;"></div>
<svg class="b" style="left:811px;top:149px;" width="210" height="130" viewBox="0 0 210 130">
<g fill="none" stroke="#909090" stroke-width="1.05">
<path d="M11.5 2.6 H60.7 V11.2 Q33.9 12.9 11.5 20.2 Z"/>
<path d="M198.5 2.6 H149.3 V11.2 Q176.1 12.9 198.5 20.2 Z"/>
<path d="M3.7 34 C28 21.5 68 16.2 105 16.2 C142 16.2 182 21.5 206.3 34 V110.5 C182 123 142 128.5 105 128.5 C68 128.5 28 123 3.7 110.5 Z"/>
<circle cx="52.9" cy="72.2" r="37.4"/><circle cx="52.9" cy="72.2" r="31.3"/>
<circle cx="157" cy="72.2" r="37.4"/><circle cx="157" cy="72.2" r="31.3"/>
</g>
<circle cx="52.9" cy="72.2" r="6.1" fill="#f5d10d"/>
<circle cx="157" cy="72.2" r="6.1" fill="#f5d10d"/>
</svg>
<div class="t" style="top:288.00px;font-size:12.4px;line-height:18px;color:#fff;left:811.2px;">Axis Monitor</div>
<div class="t" style="top:310.00px;font-size:12.4px;line-height:18px;color:#fff;left:811.2px;">0</div>
<div class="b" style="left:823px;top:314px;width:98px;height:9px;background:#343434;"></div>
<div class="b" style="left:924px;top:314px;width:97px;height:9px;background:#343434;"></div>
<div class="t" style="top:333.00px;font-size:12.4px;line-height:18px;color:#fff;left:811.2px;">1</div>
<div class="b" style="left:823px;top:337px;width:198px;height:9px;background:#343434;"></div>
<div class="b" style="left:921.9px;top:334.6px;width:2.2px;height:13.9px;background:#ffffff;border-radius:1px;"></div>
<div class="t" style="top:356.00px;font-size:12.4px;line-height:18px;color:#fff;left:811.2px;">2</div>
<div class="b" style="left:823px;top:360px;width:198px;height:9px;background:#343434;"></div>
<div class="b" style="left:921.9px;top:357.6px;width:2.2px;height:13.9px;background:#ffffff;border-radius:1px;"></div>
<div class="t" style="top:379.00px;font-size:12.4px;line-height:18px;color:#fff;left:811.2px;">3</div>
<div class="b" style="left:823px;top:383px;width:198px;height:9px;background:#343434;"></div>
<div class="b" style="left:921.9px;top:380.6px;width:2.2px;height:13.9px;background:#ffffff;border-radius:1px;"></div>
<div class="t" style="top:402.00px;font-size:12.4px;line-height:18px;color:#fff;left:811.2px;">4</div>
<div class="b" style="left:823px;top:406px;width:198px;height:9px;background:#343434;"></div>
<div class="b" style="left:921.9px;top:403.6px;width:2.2px;height:13.9px;background:#ffffff;border-radius:1px;"></div>
<div class="t" style="top:425.00px;font-size:12.4px;line-height:18px;color:#fff;left:811.2px;">5</div>
<div class="b" style="left:823px;top:429px;width:198px;height:9px;background:#343434;"></div>
<div class="b" style="left:921.9px;top:426.6px;width:2.2px;height:13.9px;background:#ffffff;border-radius:1px;"></div>
<div class="t" style="top:448.00px;font-size:12.4px;line-height:18px;color:#fff;left:811.2px;">6</div>
<div class="b" style="left:823px;top:452px;width:198px;height:9px;background:#343434;"></div>
<div class="b" style="left:921.9px;top:449.6px;width:2.2px;height:13.9px;background:#ffffff;border-radius:1px;"></div>
<div class="t" style="top:471.00px;font-size:12.4px;line-height:18px;color:#fff;left:811.2px;">7</div>
<div class="b" style="left:823px;top:475px;width:198px;height:9px;background:#343434;"></div>
<div class="b" style="left:921.9px;top:472.6px;width:2.2px;height:13.9px;background:#ffffff;border-radius:1px;"></div>
<div class="t" style="top:498.00px;font-size:12.4px;line-height:18px;color:#fff;letter-spacing:0.377px;left:811.2px;">Button Monitor</div>
<div class="b" style="left:811.0px;top:533px;width:21.4px;height:22px;background:#fff291;border:1px solid #fff;"></div>
<div class="t" style="top:535.00px;font-size:12.4px;line-height:18px;color:#000;left:671.6px;width:300px;text-align:center;">0</div>
<div class="b" style="left:831.7px;top:533px;width:21.4px;height:22px;background:#626270;border:1px solid #fff;"></div>
<div class="t" style="top:535.00px;font-size:12.4px;line-height:18px;color:#fff;left:692.3000000000001px;width:300px;text-align:center;">1</div>
<div class="b" style="left:852.4px;top:533px;width:21.4px;height:22px;background:#626270;border:1px solid #fff;"></div>
<div class="t" style="top:535.00px;font-size:12.4px;line-height:18px;color:#fff;left:713.0px;width:300px;text-align:center;">2</div>
<div class="b" style="left:873.1px;top:533px;width:21.4px;height:22px;background:#626270;border:1px solid #fff;"></div>
<div class="t" style="top:535.00px;font-size:12.4px;line-height:18px;color:#fff;left:733.7px;width:300px;text-align:center;">3</div>
<div class="b" style="left:893.8px;top:533px;width:21.4px;height:22px;background:#626270;border:1px solid #fff;"></div>
<div class="t" style="top:535.00px;font-size:12.4px;line-height:18px;color:#fff;left:754.4px;width:300px;text-align:center;">4</div>
<div class="b" style="left:914.5px;top:533px;width:21.4px;height:22px;background:#626270;border:1px solid #fff;"></div>
<div class="t" style="top:535.00px;font-size:12.4px;line-height:18px;color:#fff;left:775.1px;width:300px;text-align:center;">5</div>
<div class="b" style="left:935.2px;top:533px;width:21.4px;height:22px;background:#626270;border:1px solid #fff;"></div>
<div class="t" style="top:535.00px;font-size:12.4px;line-height:18px;color:#fff;left:795.8000000000001px;width:300px;text-align:center;">6</div>
<div class="b" style="left:955.9px;top:533px;width:21.4px;height:22px;background:#626270;border:1px solid #fff;"></div>
<div class="t" style="top:535.00px;font-size:12.4px;line-height:18px;color:#fff;left:816.5px;width:300px;text-align:center;">7</div>
<div class="b" style="left:1024px;top:0px;width:1px;height:373px;background:#752220;"></div>
<div class="b" style="left:1024px;top:405px;width:1px;height:356px;background:#a0a0a0;"></div>
<div class="b" style="left:1024px;top:442px;width:1px;height:1px;background:#808080;"></div>
<div class="b" style="left:1024px;top:456px;width:1px;height:10px;background:#7a4630;"></div>
</body></html>
